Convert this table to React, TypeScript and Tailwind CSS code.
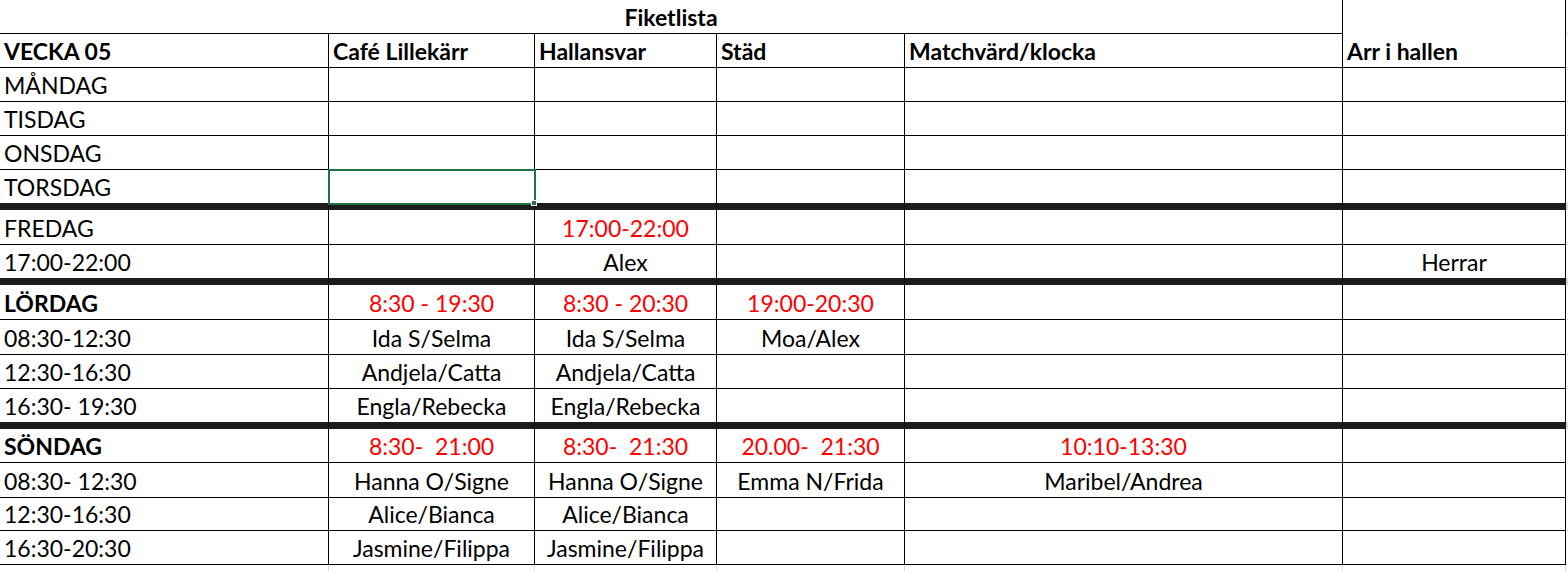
import clsx from 'clsx';

type Cell = { t: string; c?: boolean; red?: boolean; b?: boolean } | null;
type Row = { h: string; thick?: boolean; cells: Cell[]; sel?: boolean };

const COLS = ['w-[329px]', 'w-[206px]', 'w-[182px]', 'w-[188px]', 'w-[438px]', 'w-[223px]'];

const L = (t: string, b = false): Cell => ({ t, b });
const C = (t: string): Cell => ({ t, c: true });
const R = (t: string): Cell => ({ t, c: true, red: true });

const rows: Row[] = [
  {
    h: 'h-[34px]',
    cells: [L('VECKA 05', true), L('Café Lillekärr', true), L('Hallansvar', true), L('Städ', true), L('Matchvärd/klocka', true), L('Arr i hallen', true)],
  },
  { h: 'h-[34px]', cells: [L('MÅNDAG'), null, null, null, null, null] },
  { h: 'h-[34px]', cells: [L('TISDAG'), null, null, null, null, null] },
  { h: 'h-[34px]', cells: [L('ONSDAG'), null, null, null, null, null] },
  { h: 'h-[40px]', thick: true, sel: true, cells: [L('TORSDAG'), null, null, null, null, null] },
  { h: 'h-[35px]', cells: [L('FREDAG'), null, R('17:00-22:00'), null, null, null] },
  { h: 'h-[40px]', thick: true, cells: [L('17:00-22:00'), null, C('Alex'), null, null, C('Herrar')] },
  { h: 'h-[35px]', cells: [L('LÖRDAG', true), R('8:30 - 19:30'), R('8:30 - 20:30'), R('19:00-20:30'), null, null] },
  { h: 'h-[35px]', cells: [L('08:30-12:30'), C('Ida S/Selma'), C('Ida S/Selma'), C('Moa/Alex'), null, null] },
  { h: 'h-[34px]', cells: [L('12:30-16:30'), C('Andjela/Catta'), C('Andjela/Catta'), null, null, null] },
  { h: 'h-[40px]', thick: true, cells: [L('16:30- 19:30'), C('Engla/Rebecka'), C('Engla/Rebecka'), null, null, null] },
  { h: 'h-[34px]', cells: [L('SÖNDAG', true), R('8:30-  21:00'), R('8:30-  21:30'), R('20.00-  21:30'), R('10:10-13:30'), null] },
  { h: 'h-[35px]', cells: [L('08:30- 12:30'), C('Hanna O/Signe'), C('Hanna O/Signe'), C('Emma N/Frida'), C('Maribel/Andrea'), null] },
  { h: 'h-[33px]', cells: [L('12:30-16:30'), C('Alice/Bianca'), C('Alice/Bianca'), null, null, null] },
  { h: 'h-[34px]', cells: [L('16:30-20:30'), C('Jasmine/Filippa'), C('Jasmine/Filippa'), null, null, null] },
];

function SheetRow({ row }: { row: Row }) {
  return (
    <div className={clsx('flex', row.h)}>
      {COLS.map((w, i) => {
        const cell = row.cells[i];
        return (
          <div
            key={i}
            className={clsx(
              w,
              'relative flex shrink-0 items-end border-r border-r-black pb-[4px]',
              row.thick ? 'border-b-[7px] border-b-[#1c1c1c]' : 'border-b border-b-black',
              cell?.c ? 'justify-center' : 'justify-start pl-[4px]'
            )}
          >
            {cell && (
              <span
                className={clsx(
                  'whitespace-pre leading-[23px]',
                  cell.b && 'font-bold',
                  cell.red ? 'text-[#ff0000]' : 'text-black'
                )}
              >
                {cell.t}
              </span>
            )}
            {row.sel && i === 1 && (
              <div className="absolute -left-px -top-px z-10 h-[36px] w-[208px] border-2 border-[#217346]">
                <div className="absolute -bottom-[3px] -right-[3px] h-[6px] w-[6px] border border-white bg-[#217346]" />
              </div>
            )}
          </div>
        );
      })}
      <div className={clsx('flex-1', row.thick ? 'border-b-[7px] border-b-[#d9d9d9]' : 'border-b border-b-[#d9d9d9]')} />
    </div>
  );
}

export default function App() {
  return (
    <div className="h-[571px] w-[1568px] overflow-hidden bg-white font-['Lato','Liberation_Sans',sans-serif] text-[23px]">
      <div className="flex h-[34px]">
        <div className="flex w-[1343px] shrink-0 items-end justify-center border-r border-b border-black pb-[4px]">
          <span className="leading-[23px] font-bold">Fiketlista</span>
        </div>
        <div className="w-[223px] shrink-0 border-r border-r-black" />
        <div className="flex-1 border-b border-b-[#d9d9d9]" />
      </div>
      {rows.map((r, i) => (
        <SheetRow key={i} row={r} />
      ))}
      <div className="flex h-[7px]">
        {COLS.map((w, i) => (
          <div key={i} className={clsx(w, 'shrink-0 border-r border-r-[#d9d9d9]')} />
        ))}
      </div>
    </div>
  );
}
